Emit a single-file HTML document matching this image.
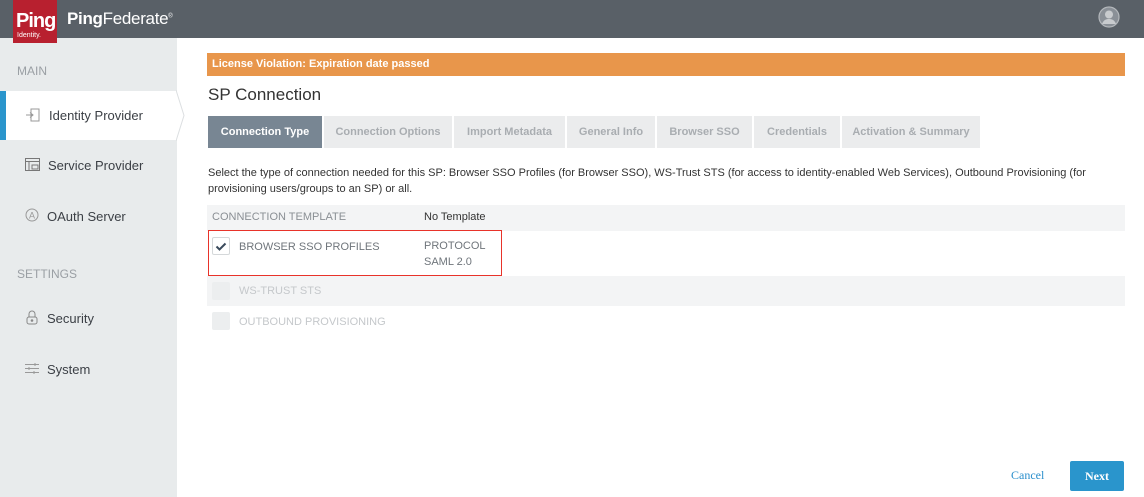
<!DOCTYPE html>
<html><head><style>
*{margin:0;padding:0;box-sizing:border-box}
body{width:1144px;height:497px;overflow:hidden;background:#fff;font-family:"Liberation Sans",sans-serif;position:relative}
.hdr{position:absolute;left:0;top:0;width:1144px;height:38px;background:#596067}
.logo{position:absolute;left:13px;top:0;width:44px;height:43px;background:#b8202f;color:#fff;z-index:5}
.side{position:absolute;left:0;top:38px;width:177px;height:459px;background:#e8ebec}
.a{position:absolute}
.nav{position:absolute;left:0;font-size:13px;color:#3c4046}
.sec{position:absolute;left:17px;font-size:12px;color:#9a9fa4}
.tab{position:absolute;top:116px;height:32px;background:#ebeced;color:#a9adb1;font-size:11px;font-weight:bold;line-height:32px;text-align:center}
.cb{position:absolute;left:212px;width:18px;height:18px;border-radius:2px;background:#eceeef}
.t{position:absolute;font-size:11px}
</style></head><body>
<div class="hdr"></div>
<div class="side"></div>
<div class="logo"><div class="a" style="left:3px;top:10px;font-size:20px;font-weight:bold;letter-spacing:-1px">Ping</div><div class="a" style="left:4px;top:32px;font-size:7px">Identity.</div></div>
<div class="a" style="left:67px;top:9px;color:#fff;font-size:17px;letter-spacing:-0.3px"><b>Ping</b>Federate<sup style="font-size:6px">®</sup></div>
<svg class="a" style="left:1098px;top:6px" width="22" height="22" viewBox="0 0 22 22"><circle cx="11" cy="11" r="10" fill="#8a9097" stroke="#b3b7bb" stroke-width="1.2"/><circle cx="11" cy="8.5" r="4" fill="#c8cbce"/><path d="M4 18c1.5-4 4-5 7-5s5.5 1 7 5" fill="#c8cbce"/></svg>
<div class="sec" style="top:64px">MAIN</div>
<div class="a" style="left:0;top:91px;width:177px;height:49px;background:#fff"></div>
<svg class="a" style="left:176px;top:90px" width="10" height="51"><path d="M0 0L8 25.5L0 51" fill="#fff" stroke="#dcdfe1"/></svg>
<div class="a" style="left:0;top:91px;width:6px;height:49px;background:#2a95cc"></div>
<svg class="a" style="left:25px;top:108px" width="16" height="14"><rect x="6" y="1" width="8" height="12" fill="none" stroke="#999"/><path d="M1 7h7M5 4.5L8 7L5 9.5" fill="none" stroke="#999"/></svg>
<div class="nav" style="left:49px;top:108px">Identity Provider</div>
<svg class="a" style="left:25px;top:158px" width="15" height="13"><rect x=".5" y=".5" width="14" height="12" fill="none" stroke="#777"/><path d="M.5 3.5h14M4 3.5v9M7 7h6v4H7z" fill="none" stroke="#777"/></svg>
<div class="nav" style="left:48px;top:158px">Service Provider</div>
<svg class="a" style="left:25px;top:208px" width="14" height="14"><circle cx="7" cy="7" r="6" fill="none" stroke="#999"/><text x="7" y="10.5" font-size="9" text-anchor="middle" fill="#999" font-family="Liberation Sans">A</text></svg>
<div class="nav" style="left:47px;top:209px">OAuth Server</div>
<div class="sec" style="top:267px">SETTINGS</div>
<svg class="a" style="left:26px;top:310px" width="12" height="15"><path d="M3 7V4a3 3 0 016 0v3" fill="none" stroke="#888"/><rect x="1" y="7" width="10" height="7" rx="2" fill="none" stroke="#888"/><circle cx="6" cy="10.5" r="1.3" fill="#888"/></svg>
<div class="nav" style="left:47px;top:311px">Security</div>
<svg class="a" style="left:25px;top:362px" width="14" height="13"><path d="M0 2.5h14M0 6.5h14M0 10.5h14" stroke="#999"/><path d="M10 1v3M4 5v3M9 9v3" stroke="#999"/></svg>
<div class="nav" style="left:47px;top:362px">System</div>

<div class="a" style="left:207px;top:53px;width:918px;height:23px;background:#e8964b;color:#fff;font-size:11px;font-weight:bold;line-height:23px;padding-left:5px">License Violation: Expiration date passed</div>
<div class="a" style="left:208px;top:85px;font-size:17px;color:#333">SP Connection</div>
<div class="tab" style="left:208px;width:114px;background:#788693;color:#fff">Connection Type</div>
<div class="tab" style="left:324px;width:128px">Connection Options</div>
<div class="tab" style="left:454px;width:111px">Import Metadata</div>
<div class="tab" style="left:567px;width:88px">General Info</div>
<div class="tab" style="left:657px;width:95px">Browser SSO</div>
<div class="tab" style="left:754px;width:86px">Credentials</div>
<div class="tab" style="left:842px;width:138px">Activation &amp; Summary</div>
<div class="a" style="left:208px;top:165px;width:900px;font-size:11px;line-height:16px;color:#333">Select the type of connection needed for this SP: Browser SSO Profiles (for Browser SSO), WS-Trust STS (for access to identity-enabled Web Services), Outbound Provisioning (for provisioning users/groups to an SP) or all.</div>
<div class="a" style="left:207px;top:205px;width:918px;height:26px;background:#f3f4f5"></div>
<div class="t" style="left:212px;top:211px;color:#8a8f94">CONNECTION TEMPLATE</div>
<div class="t" style="left:424px;top:211px;color:#333">No Template</div>
<div class="a" style="left:208px;top:230px;width:294px;height:46px;border:1.5px solid #e8332a"></div>
<div class="cb" style="top:237px;background:#fff;border:1px solid #d5d8da"></div>
<svg class="a" style="left:215px;top:242px" width="12" height="9"><path d="M1.5 4.5L4.5 7.5L10.5 1.5" fill="none" stroke="#3a4a5c" stroke-width="2"/></svg>
<div class="t" style="left:239px;top:241px;color:#6f757b">BROWSER SSO PROFILES</div>
<div class="t" style="left:424px;top:238px;color:#6f757b;line-height:16px">PROTOCOL<br>SAML 2.0</div>
<div class="a" style="left:207px;top:276px;width:918px;height:30px;background:#f3f4f5"></div>
<div class="cb" style="top:282px"></div>
<div class="t" style="left:239px;top:285px;color:#c5c8cb">WS-TRUST STS</div>
<div class="cb" style="top:312px"></div>
<div class="t" style="left:239px;top:316px;color:#c5c8cb">OUTBOUND PROVISIONING</div>
<div class="a" style="left:1011px;top:468px;font-family:'Liberation Serif',serif;font-size:12px;color:#2a8fcc">Cancel</div>
<div class="a" style="left:1070px;top:461px;width:54px;height:30px;background:#2a95cc;border-radius:2px;color:#fff;font-family:'Liberation Serif',serif;font-weight:bold;font-size:12px;line-height:30px;text-align:center">Next</div>
</body></html>
